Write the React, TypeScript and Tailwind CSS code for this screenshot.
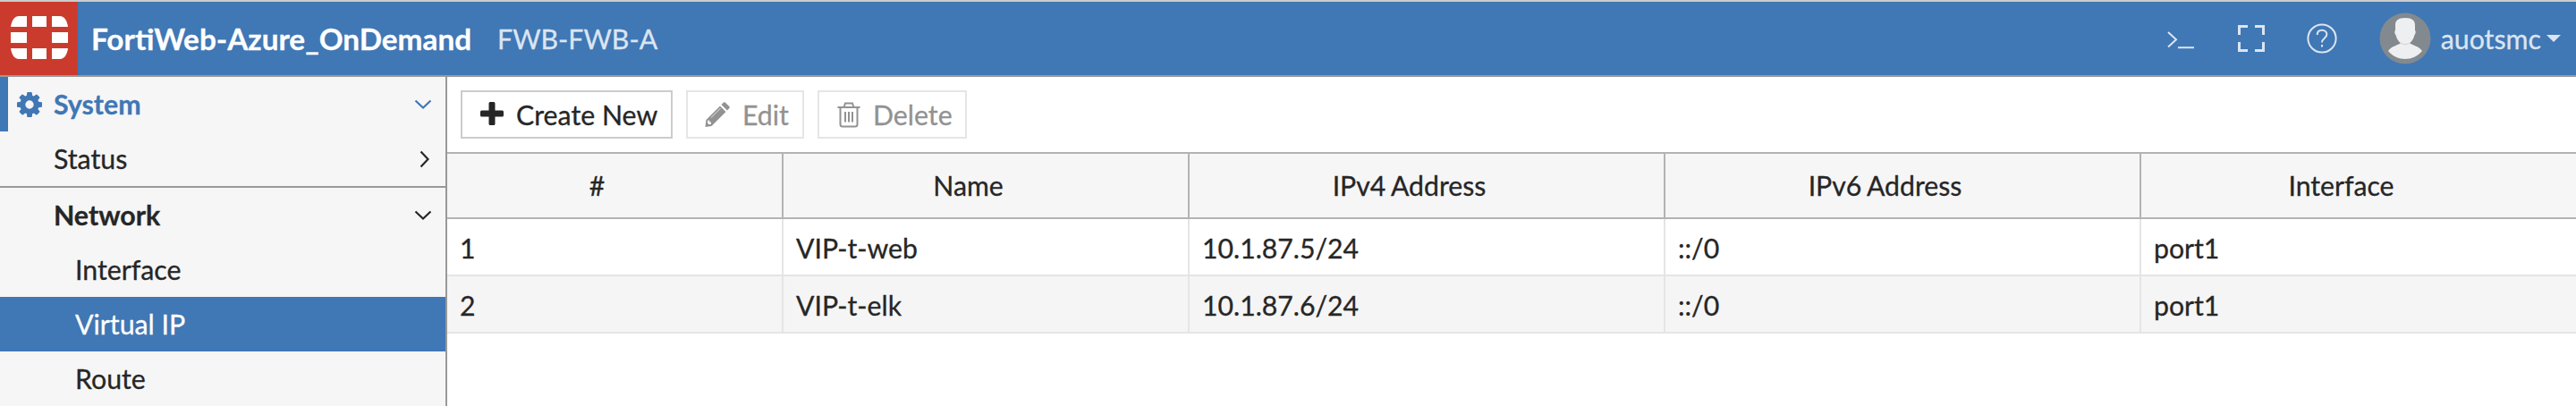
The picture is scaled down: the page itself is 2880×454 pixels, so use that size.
import React from "react";

const columns = [
  { label: "#", width: "w-[376px]" },
  { label: "Name", width: "w-[454px]" },
  { label: "IPv4 Address", width: "w-[532px]" },
  { label: "IPv6 Address", width: "w-[532px]" },
  { label: "Interface", width: "w-[486px]" },
];

const rows = [
  ["1", "VIP-t-web", "10.1.87.5/24", "::/0", "port1"],
  ["2", "VIP-t-elk", "10.1.87.6/24", "::/0", "port1"],
];

function Logo() {
  return (
    <svg className="block h-[48px] w-[64px]" viewBox="0 0 64 48" fill="#fff">
      <path d="M0 12C1 5 4 0 9 0H18V12Z" />
      <path d="M24 0H40V12H24Z" />
      <path d="M46 0H55C60 0 63 5 64 12H46Z" />
      <path d="M0 18H18V30H0Z" />
      <path d="M46 18H64V30H46Z" />
      <path d="M0 36H18V48H9C4 48 1 43 0 36Z" />
      <path d="M24 36H40V48H24Z" />
      <path d="M46 36H64C63 43 60 48 55 48H46Z" />
    </svg>
  );
}

function Cog() {
  return (
    <svg className="block h-[28px] w-[28px]" viewBox="0 128 1536 1536" fill="currentColor">
      <path fillRule="evenodd" d="M1024 896q0 106-75 181t-181 75-181-75-75-181 75-181 181-75 181 75 75 181zm512-109v222q0 12-8 23t-20 13l-185 28q-19 54-39 91 35 50 107 138 10 12 10 25t-9 23q-27 37-99 108t-94 71q-12 0-26-9l-138-108q-44 23-91 38-16 136-29 186-7 28-36 28h-222q-14 0-24.500-8.500t-11.500-21.500l-28-184q-49-16-90-37l-141 107q-10 9-25 9-14 0-25-11-126-114-165-168-7-10-7-23 0-12 8-23 15-21 51-66.500t54-70.500q-27-50-41-99l-183-27q-13-2-21-12.500t-8-23.500v-222q0-12 8-23t19-13l186-28q14-46 39-92-40-57-107-138-10-12-10-24 0-10 9-23 26-36 98.500-107.500t94.500-71.500q13 0 26 10l138 107q44-23 91-38 16-136 29-186 7-28 36-28h222q14 0 24.500 8.500t11.500 21.500l28 184q49 16 90 37l142-107q9-9 24-9 13 0 25 10 129 119 165 170 7 8 7 22 0 12-8 23-15 21-51 66.500t-54 70.500q26 50 41 98l183 28q13 2 21 12.500t8 23.500z" />
    </svg>
  );
}

function ChevronDown() {
  return (
    <svg className="block h-[12px] w-[20px]" viewBox="0 0 20 12" fill="none" stroke="currentColor" strokeWidth="2.2">
      <path d="M1.5 1.5L10 9.5L18.5 1.5" />
    </svg>
  );
}

function ChevronRight() {
  return (
    <svg className="block h-[20px] w-[12px]" viewBox="0 0 12 20" fill="none" stroke="currentColor" strokeWidth="2.2">
      <path d="M1.5 1.5L9.5 10L1.5 18.5" />
    </svg>
  );
}

function Header() {
  return (
    <header className="flex h-[86px] items-stretch border-t-2 border-b-2 border-t-[#cccccc] border-b-[#999999] bg-[#4077b5] text-[#dbe5f1]">
      <div className="flex w-[87px] items-start bg-[#cb3b2d] pt-[16px] pl-[12px]">
        <Logo />
      </div>
      <div className="flex items-center pl-[15px] leading-[82px]">
        <span className="w-[454px] text-[33.3px] font-bold text-white">FortiWeb-Azure_OnDemand</span>
        <span className="text-[30.3px]">FWB-FWB-A</span>
      </div>
      <div className="ml-auto flex pr-[17px]">
        <svg className="mt-[32px] block h-[22px] w-[32px]" viewBox="0 0 32 22" fill="none" stroke="currentColor" strokeWidth="2">
          <path d="M1 2L10 10.3L1 18.6" />
          <path d="M12 19.200H30" />
        </svg>
        <svg className="mt-[26px] ml-[47px] block h-[30px] w-[30px]" viewBox="0 0 30 30" fill="none" stroke="currentColor" strokeWidth="3">
          <path d="M1.5 11V1.5H11M19 1.5H28.5V11M28.5 19V28.5H19M11 28.5H1.5V19" />
        </svg>
        <svg className="mt-[24px] ml-[47px] block h-[34px] w-[34px]" viewBox="0 0 34 34" fill="none" stroke="currentColor" strokeWidth="2">
          <circle cx="17" cy="17" r="15.6" />
          <path d="M11.7 13C11.7 9.6 14 7.7 17 7.7S22.4 9.8 22.4 12.6C22.4 16.6 17 17 17 21.4" />
          <path d="M17 24V26.5" />
        </svg>
        <svg className="mt-[12px] ml-[47px] block h-[58px] w-[58px]" viewBox="0 0 58 58">
          <circle cx="29" cy="29" r="28.5" fill="#82898f" />
          <path d="M10 43C14 37 21 37 24 34H34C37 37 44 37 48 43C38 55 20 55 10 43Z" fill="#eeeff1" />
          <path d="M29 6C37 6 40 9 40 14V20C41 20 41 24 39.500 25C38 32 33 36 29 36C25 36 20 32 18.500 25C17 24 17 20 18 20V14C18 9 21 6 29 6Z" fill="#eeeff1" />
          <path d="M23 33C26 36.500 32 36.500 35 33" fill="none" stroke="#cfd2d5" />
        </svg>
        <span className="ml-[11px] text-[30.3px] leading-[82px]">auotsmc</span>
        <svg className="mt-[37px] ml-[6px] block h-[8px] w-[16px]" viewBox="0 0 16 8" fill="currentColor">
          <path d="M0 0H16L8 8Z" />
        </svg>
      </div>
    </header>
  );
}

function Sidebar() {
  return (
    <nav className="flex w-[500px] shrink-0 flex-col border-r-2 border-[#999999] bg-[#f6f6f6] text-[30.3px] leading-[61px]">
      <div className="flex h-[61px] items-center border-l-[9px] border-[#4077b5] pr-[15px] pl-[10px] font-bold text-[#4077b5]">
        <Cog />
        <span className="ml-[13px] flex-1">System</span>
        <ChevronDown />
      </div>
      <div className="flex h-[63px] items-center border-b-2 border-[#999999] pr-[17px] pl-[60px]">
        <span className="flex-1">Status</span>
        <ChevronRight />
      </div>
      <div className="flex h-[61px] items-center pr-[15px] pl-[60px] font-bold">
        <span className="flex-1">Network</span>
        <ChevronDown />
      </div>
      <div className="h-[61px] pl-[84px]">Interface</div>
      <div className="h-[61px] bg-[#4077b5] pl-[84px] text-white">Virtual IP</div>
      <div className="h-[61px] pl-[84px]">Route</div>
    </nav>
  );
}

function Toolbar() {
  return (
    <div className="flex h-[84px] gap-[15px] pt-[15px] pl-[15px] text-[30.3px] leading-[50px]">
      <button className="flex h-[54px] w-[237px] border-2 border-[#cccccc]">
        <svg className="mt-[11px] ml-[20px] block h-[26px] w-[26px]" viewBox="0 0 26 26" fill="currentColor">
          <path d="M11 0H15Q16.500 0 16.500 1.500V9.500H24.500Q26 9.500 26 11V15Q26 16.500 24.500 16.500H16.500V24.500Q16.500 26 15 26H11Q9.500 26 9.500 24.500V16.500H1.500Q0 16.500 0 15V11Q0 9.500 1.500 9.500H9.500V1.500Q9.500 0 11 0Z" />
        </svg>
        <span className="ml-[14px]">Create New</span>
      </button>
      <button className="flex h-[54px] w-[132px] border-2 border-[#e5e5e5] text-[#929292]">
        <svg className="mt-[11px] ml-[19px] block h-[28px] w-[28px]" viewBox="0 0 28 28" fill="currentColor">
          <path fillRule="evenodd" d="M17 4.500L23.500 11L7.500 27L0.500 28L1.500 20ZM3.500 20.500L2.900 23.500L4.700 25.300L7 24.800V22.500H5.200V20.500Z" />
          <path d="M18.500 3L21 0.600Q22 -0.200 23 0.700L27.300 5Q28.200 6 27.300 7L25 9.500Z" />
          <path d="M7 17.500L17.500 7" fill="none" stroke="#fff" strokeWidth="0.8" />
        </svg>
        <span className="ml-[14px]">Edit</span>
      </button>
      <button className="flex h-[54px] w-[167px] border-2 border-[#e5e5e5] text-[#929292]">
        <svg className="mt-[11px] ml-[20px] block h-[29px] w-[26px]" viewBox="0 0 26 29" fill="none" stroke="currentColor" strokeWidth="2">
          <path d="M0.500 6H25.500M7.500 6L9 1.500H17L18.500 6M3.500 6V25Q3.500 27.500 6 27.500H20Q22.500 27.500 22.500 25V6M9 11V22.500M13 11V22.500M17 11V22.500" />
        </svg>
        <span className="ml-[14px]">Delete</span>
      </button>
    </div>
  );
}

function VipTable() {
  return (
    <table className="w-[2380px] table-fixed border-separate border-spacing-0 text-[30.2px] leading-[60px]">
      <thead>
        <tr className="h-[75px] bg-[#f6f6f6]">
          {columns.map((c) => (
            <th
              key={c.label}
              className={`${c.width} border-y-2 border-r-2 border-[#b3b3b3] p-0 pr-[39px] pb-[2px] text-center font-normal [word-spacing:-1px] last:border-r-0`}
            >
              {c.label}
            </th>
          ))}
        </tr>
      </thead>
      <tbody>
        {rows.map((cells) => (
          <tr key={cells[0]} className="h-[64px] even:bg-[#f5f5f5]">
            {cells.map((cell, i) => (
              <td key={i} className="border-r-2 border-b-2 border-[#e5e5e5] p-0 pt-[2px] pl-[14px] last:border-r-0">
                {cell}
              </td>
            ))}
          </tr>
        ))}
      </tbody>
    </table>
  );
}

export default function App() {
  return (
    <div className="h-[454px] w-[2880px] overflow-hidden bg-white font-['Lato',sans-serif] text-[#262626] [-webkit-text-stroke:0.3px]">
      <Header />
      <div className="flex h-[368px]">
        <Sidebar />
        <main className="flex-1">
          <Toolbar />
          <VipTable />
        </main>
      </div>
    </div>
  );
}
